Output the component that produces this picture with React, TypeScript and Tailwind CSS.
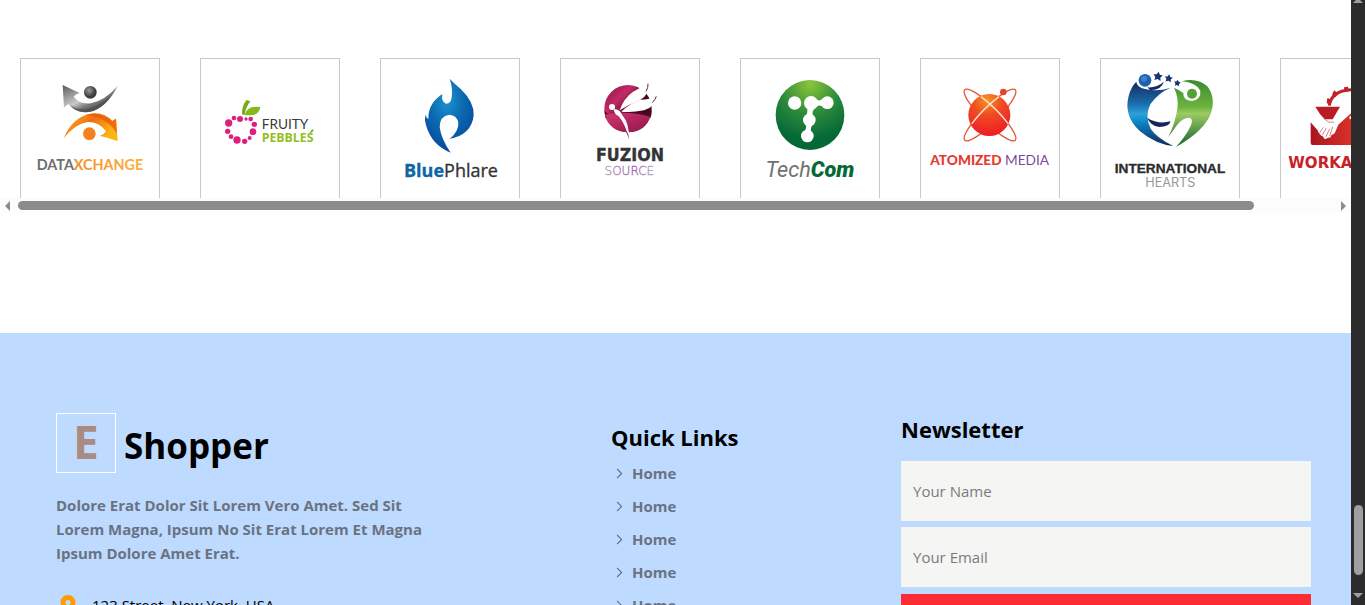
import type { ReactNode } from "react";
import { ChevronRight } from "lucide-react";
import { FaLocationDot } from "react-icons/fa6";

const sans = "font-['Open_Sans','Noto_Sans',sans-serif]";

function Logo({ label, x = 33, children }: { label: string; x?: number; children: ReactNode }) {
  return (
    <svg role="img" aria-label={label} viewBox={`${x} 27 414 417`} className="block h-full w-full">
      {children}
    </svg>
  );
}

function DataXchange() {
  return (
    <Logo label="DataXchange">
      <defs>
        <linearGradient id="dxGray" x1="0" y1="0" x2="1" y2="1">
          <stop offset="0" stopColor="#5a5a5c" />
          <stop offset=".45" stopColor="#c9c9cb" />
          <stop offset=".6" stopColor="#77777a" />
          <stop offset="1" stopColor="#2f2f31" />
        </linearGradient>
        <linearGradient id="dxOrange" x1="0" y1="0" x2="1" y2=".4">
          <stop offset="0" stopColor="#fcb423" />
          <stop offset=".55" stopColor="#ee6f12" />
          <stop offset="1" stopColor="#fdb515" />
        </linearGradient>
        <radialGradient id="dxBall" cx=".4" cy=".35">
          <stop offset="0" stopColor="#9b9b9d" />
          <stop offset="1" stopColor="#3c3c3e" />
        </radialGradient>
        <linearGradient id="dxText" x1="0" x2="1">
          <stop offset="0" stopColor="#f47c20" />
          <stop offset="1" stopColor="#fbb03b" />
        </linearGradient>
      </defs>
      <path d="M158 105 L209 129 Q196 132 191 140 Q208 163 243 160 Q284 152 323 108 Q294 166 250 183 Q203 197 176 162 Q168 166 162 173 Z" fill="url(#dxGray)" />
      <path d="M176 162 Q205 187 250 170 Q286 154 305 134 Q284 170 250 183 Q203 197 176 162Z" fill="#444446" opacity=".55" />
      <circle cx="241" cy="127" r="19" fill="url(#dxBall)" />
      <path d="M161 265 Q188 198 250 190 Q286 188 307 213 L318 206 L323 273 L270 257 Q283 253 288 244 Q268 215 232 216 Q195 222 161 265Z" fill="url(#dxOrange)" />
      <path d="M226 194 Q270 183 307 213 L318 206 L321 252 Q298 204 226 194Z" fill="#e9570d" opacity=".75" />
      <circle cx="238" cy="251" r="19" fill="#f4801f" />
      <text x="240" y="360" textAnchor="middle" fontFamily="Lato, sans-serif" fontWeight="700" fontSize="43" fill="#6d6e71" stroke="none">
        DATA<tspan fill="url(#dxText)">XCHANGE</tspan>
      </text>
    </Logo>
  );
}

const pebbles = [
  [656, 219, 11], [672, 204, 7], [690, 207, 9], [708, 207, 5], [722, 207, 7], [733, 223, 8],
  [729, 245, 10], [719, 264, 6], [704, 274, 8], [681, 270, 11], [663, 260, 7], [653, 244, 8],
];

function FruityPebbles() {
  return (
    <Logo label="Fruity Pebbles" x={573}>
      {pebbles.map(([cx, cy, r]) => (
        <circle key={`${cx}-${cy}`} cx={cx} cy={cy} r={r} fill="#de1f7b" />
      ))}
      <path d="M696 193 Q695 166 710 150 L721 154 Q707 172 704 195Z" fill="#79a818" />
      <path d="M705 196 Q708 166 751 171 Q747 195 721 196 Q712 195 705 196Z" fill="#86b817" />
      <text x="755" y="238" fontFamily="Lato, sans-serif" fontSize="41" fill="#3a3a3c">FRUITY</text>
      <text x="755" y="276" fontFamily="'Open Sans', sans-serif" fontWeight="700" fontSize="37" fill="#93c01f">PEBBLES</text>
      <path d="M900 247 Q902 239 911 237 Q911 246 900 249Z" fill="#79a818" />
    </Logo>
  );
}

function BluePhlare() {
  return (
    <Logo label="BluePhlare">
      <defs>
        <radialGradient id="bpFlame" cx=".45" cy=".3" r=".7">
          <stop offset="0" stopColor="#1a93cf" />
          <stop offset=".5" stopColor="#0b69b0" />
          <stop offset="1" stopColor="#06489b" />
        </radialGradient>
      </defs>
      <path d="M239 86 Q253 101 273 118 Q313 157 311 196 Q305 254 239 267 Q266 245 265 219 Q261 195 238 194 Q209 198 209 231 Q213 266 242 308 Q186 287 168 226 Q163 207 166 194 Q170 204 175 207 Q174 160 217 132 Q213 156 228 161 Q244 161 245 141 Q249 114 239 86Z" fill="url(#bpFlame)" />
      <text x="243" y="382" textAnchor="middle" fontFamily="'Open Sans', sans-serif" fontSize="54" fill="#333335" stroke="#333335" strokeWidth="1">
        <tspan fontWeight="700" fill="#0d66a5" stroke="#0d66a5">Blue</tspan>Phlare
      </text>
    </Logo>
  );
}

function FuzionSource() {
  return (
    <Logo label="Fuzion Source" x={573}>
      <defs>
        <linearGradient id="fzBall" x1="0" y1="0" x2="1" y2="1">
          <stop offset="0" stopColor="#8b1245" />
          <stop offset=".3" stopColor="#c42a67" />
          <stop offset=".55" stopColor="#4a0823" />
          <stop offset="1" stopColor="#3a061c" />
        </linearGradient>
        <linearGradient id="fzHill" x1="0" y1="0" x2="1" y2="1">
          <stop offset="0" stopColor="#d33672" />
          <stop offset="1" stopColor="#8f1549" />
        </linearGradient>
        <linearGradient id="fzText" x1="0" x2="1">
          <stop offset="0" stopColor="#b5a3bf" />
          <stop offset=".6" stopColor="#9c63b3" />
          <stop offset="1" stopColor="#bdb3c2" />
        </linearGradient>
      </defs>
      <circle cx="774" cy="176" r="71" fill="url(#fzBall)" />
      <path d="M703 180 Q712 202 750 194 L845 182 Q845 196 841 204 H706Z" fill="#4a0823" />
      <path d="M704 194 Q770 180 841 200 Q826 246 774 247 Q718 244 704 194Z" fill="url(#fzHill)" />
      <path d="M749 181 Q762 144 788 126 Q818 110 834 100 Q840 134 810 150 Q778 163 749 181Z" fill="#fff" />
      <path d="M754 185 Q782 158 810 149 Q842 149 859 138 Q856 172 822 181 Q784 189 754 185Z" fill="#fff" />
      <path d="M834 101 Q835 113 828 124 M859 139 Q856 149 847 158" fill="none" stroke="#5d2440" strokeWidth="3" />
      <circle cx="726" cy="171" r="9" fill="#fff" />
      <path d="M731 178 Q748 176 756 194 Q779 220 777 268 Q767 223 746 199 Q732 192 731 178Z" fill="#fff" />
      <path d="M772 246 Q777 254 777 269 Q774 258 768 246Z" fill="#9a3d63" />
      <text x="780" y="332" textAnchor="middle" fontFamily="'DejaVu Sans Condensed', 'DejaVu Sans', sans-serif" fontWeight="700" fontSize="53" fill="#333436" stroke="#333436" strokeWidth="1">FUZION</text>
      <text x="778" y="375" textAnchor="middle" fontFamily="'DejaVu Sans', sans-serif" fontWeight="200" fontSize="36" fill="url(#fzText)" stroke="url(#fzText)" strokeWidth="1">SOURCE</text>
    </Logo>
  );
}

function TechCom() {
  return (
    <Logo label="TechCom">
      <defs>
        <radialGradient id="tcBall" cx=".5" cy=".05" r=".8">
          <stop offset="0" stopColor="#8cc63a" />
          <stop offset=".55" stopColor="#2b8a3b" />
          <stop offset="1" stopColor="#056937" />
        </radialGradient>
      </defs>
      <ellipse cx="240" cy="195" rx="103" ry="105" fill="url(#tcBall)" />
      <g fill="#fff">
        <circle cx="194" cy="159" r="20" />
        <circle cx="243" cy="159" r="21" />
        <circle cx="292" cy="158" r="19" />
        <circle cx="238" cy="210" r="19" />
        <circle cx="232" cy="258" r="19" />
        <path d="M256 145 Q268 158 280 144 V172 Q268 160 256 173Z M230 170 Q236 184 226 200 H250 Q243 186 256 170Z M226 220 Q232 234 222 248 H243 Q240 234 250 220Z" />
      </g>
      <text x="240" y="382" textAnchor="middle" fontFamily="Roboto, sans-serif" fontStyle="italic" fontSize="65" fill="#707173">
        Tech<tspan fontWeight="900" fill="#056937">Com</tspan>
      </text>
    </Logo>
  );
}

function AtomizedMedia() {
  return (
    <Logo label="Atomized Media" x={573}>
      <defs>
        <radialGradient id="amBall" cx=".45" cy=".15" r=".85">
          <stop offset="0" stopColor="#f7941d" />
          <stop offset=".4" stopColor="#f04e23" />
          <stop offset="1" stopColor="#ed1c24" />
        </radialGradient>
      </defs>
      <g fill="none" stroke="#e4573b" strokeWidth="4">
        <ellipse cx="780" cy="195" rx="107" ry="24" transform="rotate(45 780 195)" />
        <ellipse cx="780" cy="195" rx="107" ry="24" transform="rotate(-45 780 195)" />
      </g>
      <circle cx="778" cy="195" r="63" fill="url(#amBall)" />
      <g fill="none" stroke="#fde3d8" strokeWidth="4">
        <path d="M722 175 Q780 167 838 175" transform="rotate(45 780 195)" />
        <path d="M722 175 Q780 167 838 175" transform="rotate(-45 780 195)" />
      </g>
      <circle cx="820" cy="126" r="10" fill="#e8432e" />
      <text x="779" y="345" textAnchor="middle" fontFamily="Lato, sans-serif" fontSize="41" fill="#7b4a9e">
        <tspan fontWeight="900" fill="#e53a2f">ATOMIZED</tspan> MEDIA
      </text>
    </Logo>
  );
}

function Star({ x, y, s }: { x: number; y: number; s: number }) {
  return (
    <path
      d="M0 -10 L3.5 -4 L10 -3 L5.5 2 L6.5 9 L0 6 L-6.5 9 L-5.5 2 L-10 -3 L-3.5 -4Z"
      transform={`translate(${x} ${y}) rotate(8) scale(${s})`}
      fill="#17386e"
    />
  );
}

function InternationalHearts() {
  return (
    <Logo label="International Hearts">
      <defs>
        <linearGradient id="ihBlue" x1="0" y1="0" x2="0" y2="1">
          <stop offset="0" stopColor="#13285c" />
          <stop offset=".35" stopColor="#1b6fae" />
          <stop offset=".5" stopColor="#2fa0da" />
          <stop offset=".62" stopColor="#0f87c9" />
          <stop offset="1" stopColor="#10285a" />
        </linearGradient>
        <linearGradient id="ihGreen" x1="0" y1="0" x2="0" y2="1">
          <stop offset="0" stopColor="#3c8a2e" />
          <stop offset=".4" stopColor="#6db33f" />
          <stop offset=".5" stopColor="#9bcb62" />
          <stop offset="1" stopColor="#14642f" />
        </linearGradient>
      </defs>
      <circle cx="165" cy="91" r="19" fill="#1b63b0" />
      <circle cx="162" cy="86" r="9" fill="#4b9be0" opacity=".6" />
      <path d="M172 112 Q200 114 222 95 Q212 122 180 120Z" fill="#13285c" />
      <path d="M139 95 Q140 112 165 117 Q205 126 242 113 Q205 128 181 163 Q163 199 182 236 Q198 262 250 288 Q199 284 150 244 Q100 198 116 138 Q122 112 139 95Z" fill="url(#ihBlue)" />
      <path d="M172 204 Q205 224 242 214 Q237 231 208 231 Q180 227 172 204Z" fill="#14265a" />
      <Star x={204} y={79} s={1.4} />
      <Star x={236} y={85} s={1.2} />
      <Star x={262} y={99} s={1} />
      <path d="M276 94 Q320 82 352 109 Q378 142 363 190 Q342 244 258 291 Q285 262 300 232 Q312 208 299 203 Q277 202 261 226 L235 261 Q257 215 262 176 Q267 144 252 113 Q266 119 280 129 Q278 151 306 153 Q334 148 331 122 Q318 98 276 94Z" fill="url(#ihGreen)" />
      <circle cx="306" cy="131" r="15" fill="#55a234" />
      <text x="240" y="370" textAnchor="middle" fontFamily="'Liberation Sans', sans-serif" fontWeight="700" fontSize="41" fill="#2b2b2d" stroke="#2b2b2d" strokeWidth="1">INTERNATIONAL</text>
      <text x="241" y="410" textAnchor="middle" fontFamily="Inter, sans-serif" fontSize="38" fill="#97989b">HEARTS</text>
    </Logo>
  );
}

function Work() {
  return (
    <Logo label="Worka" x={573}>
      <defs>
        <linearGradient id="wkRed" x1="0" y1="0" x2="1" y2="0">
          <stop offset="0" stopColor="#a81620" />
          <stop offset=".6" stopColor="#dc3328" />
          <stop offset="1" stopColor="#f0523a" />
        </linearGradient>
      </defs>
      <path d="M662 217 L690 249 L705 268 L734 250 L745 224 L783 190 H880 V285 H668 Q662 285 662 278Z" fill="url(#wkRed)" />
      <path d="M676 170 H750 L728 208 H704 Q688 192 676 170Z" fill="#b91c25" />
      <path d="M700 206 L716 217 L732 215 L724 225 L712 240 L694 258 L684 245Z M712 222 L728 232 L722 262 L703 266Z" fill="#fff" />
      <path d="M702 206 L717 217 L732 216 M700 232 L689 248 M709 234 L697 255 M719 236 L708 260 M728 230 L719 258" fill="none" stroke="#bf4a4d" strokeWidth="2" />
      <path d="M718 167 Q724 122 783 119 Q830 119 850 167" fill="none" stroke="#c2202a" strokeWidth="9" />
      <path d="M712 144 l14 5 l-4 14 l-12 -3Z M733 121 l12 11 l-9 10 l-10 -9Z M762 112 l12 -2 l2 14 l-13 2Z" fill="#c2202a" />
      <circle cx="783" cy="203" r="5" fill="#fff" />
      <text x="595" y="353" fontFamily="'DejaVu Sans', sans-serif" fontWeight="700" fontSize="45" fill="#cb2027">WORKA</text>
    </Logo>
  );
}

const brands = [DataXchange, FruityPebbles, BluePhlare, FuzionSource, TechCom, AtomizedMedia, InternationalHearts, Work];

function Brands() {
  return (
    <section aria-label="Brands" className="pt-[58px] pb-[120px]">
      <ul className="flex gap-10 overflow-hidden px-5">
        {brands.map((Brand, i) => (
          <li key={i} className="h-[140px] w-[140px] shrink-0 border border-b-0 border-[#c8c8c8]">
            <Brand />
          </li>
        ))}
      </ul>
      <div className="flex h-[15px] items-center gap-2 bg-[#fcfcfc] px-[5px]">
        <svg viewBox="0 0 5 10" className="h-[10px] w-[5px]" aria-hidden="true">
          <path d="M5 0 V10 L0 5Z" fill="#8b8b8b" />
        </svg>
        <div className="flex-1">
          <div className="h-[9px] w-[94%] rounded-full bg-[#8b8b8b]" />
        </div>
        <svg viewBox="0 0 5 10" className="h-[10px] w-[5px]" aria-hidden="true">
          <path d="M0 0 V10 L5 5Z" fill="#8b8b8b" />
        </svg>
      </div>
    </section>
  );
}

function Footer() {
  return (
    <footer className="grid grid-cols-[555fr_290fr_410fr] bg-[#bedbff] pt-20 pr-10 pb-20 pl-14 text-black">
      <div>
        <h2 className="flex items-baseline gap-2 text-[35px] leading-10 font-bold">
          <span className="h-[60px] w-[60px] border border-white text-center text-[46px] leading-[54px] text-[#a98b80]">E</span>
          <span>Shopper</span>
        </h2>
        <p className="mt-5 max-w-[385px] leading-6 font-bold text-[#6a7282]">
          Dolore Erat Dolor Sit Lorem Vero Amet. Sed Sit Lorem Magna, Ipsum No Sit Erat Lorem Et Magna Ipsum Dolore Amet Erat.
        </p>
        <address className="mt-7 flex items-center gap-3 leading-6 not-italic">
          <FaLocationDot className="h-5 w-6 text-[#ff9a00]" aria-hidden="true" />
          123 Street, New York, USA
        </address>
      </div>
      <nav aria-label="Quick Links" className="pt-2">
        <h3 className="text-[22px] leading-8 font-bold">Quick Links</h3>
        <ul className="mt-1 font-bold text-[#6a7282]">
          {[0, 1, 2, 3, 4, 5].map((i) => (
            <li key={i}>
              <a href="#home" className="flex h-[33px] items-center gap-1">
                <ChevronRight className="h-[17px] w-[17px]" strokeWidth={1.5} aria-hidden="true" />
                Home
              </a>
            </li>
          ))}
        </ul>
      </nav>
      <form onSubmit={(e) => e.preventDefault()}>
        <h3 className="text-[22px] leading-8 font-bold">Newsletter</h3>
        <div className="mt-4 flex flex-col gap-[6px]">
          <input aria-label="Your Name" placeholder="Your Name" className="h-[60px] bg-[#f5f5f4] px-3 placeholder:text-[#7b7b7b]" />
          <input aria-label="Your Email" type="email" placeholder="Your Email" className="h-[60px] bg-[#f5f5f4] px-3 placeholder:text-[#7b7b7b]" />
        </div>
        <button type="submit" aria-label="Subscribe" className="mt-[7px] block h-[60px] w-full bg-[#fb2c36]" />
      </form>
    </footer>
  );
}

export default function App() {
  return (
    <div className={`flex h-screen overflow-hidden bg-white text-[15px] ${sans}`}>
      <main className="min-w-0 flex-1 overflow-hidden">
        <Brands />
        <Footer />
      </main>
      <div className="flex w-[14px] shrink-0 flex-col items-center bg-[#2c2c2c]" aria-hidden="true">
        <svg viewBox="0 0 10 3" className="h-[3px] w-[10px]">
          <path d="M3 0 H7 L10 3 H0Z" fill="#9f9f9f" />
        </svg>
        <div className="flex-1" />
        <div className="h-[70px] w-[9px] rounded-full bg-[#9f9f9f]" />
        <svg viewBox="0 0 10 5" className="mt-[18px] mb-[7px] h-[5px] w-[10px]">
          <path d="M0 0 H10 L5 5Z" fill="#9f9f9f" />
        </svg>
      </div>
    </div>
  );
}
